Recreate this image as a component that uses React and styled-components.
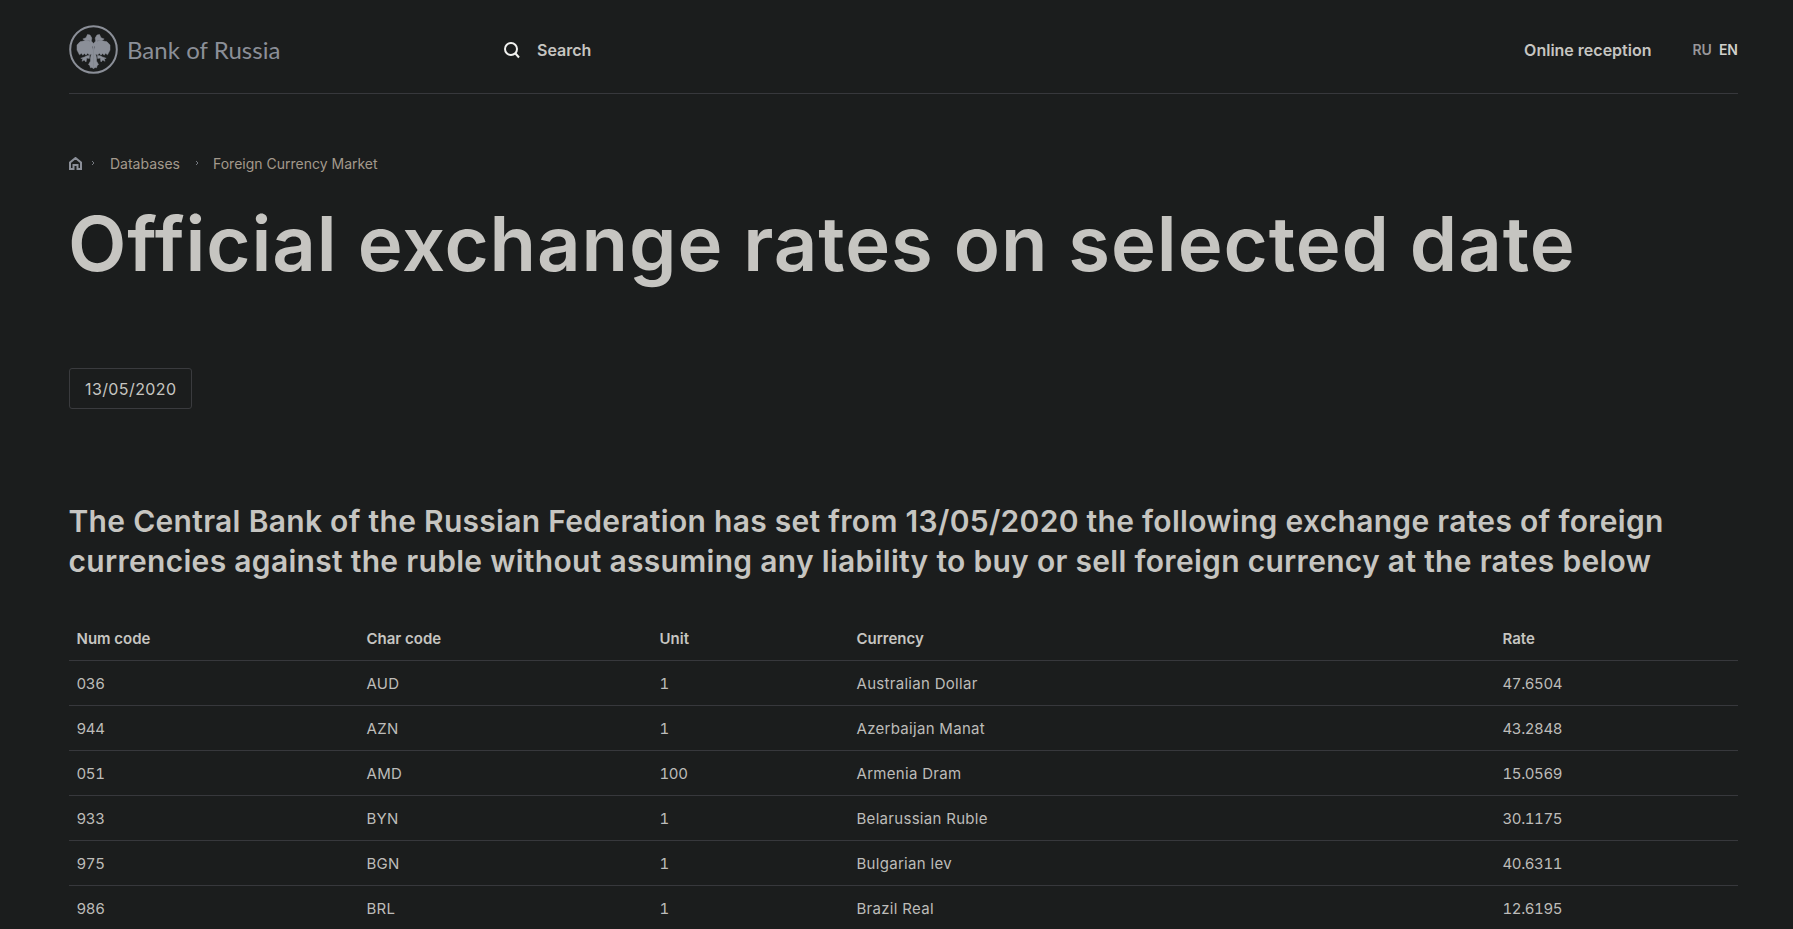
import React from 'react';
import styled, { createGlobalStyle } from 'styled-components';

const GlobalStyle = createGlobalStyle`
  html, body {
    margin: 0;
    padding: 0;
    background: #1b1d1d;
  }
  body {
    font-family: Inter, "Liberation Sans", sans-serif;
    color: #c6c5c1;
  }
`;

const Page = styled.div`
  padding: 0 55px 0 69px;
  height: 929px;
  overflow: hidden;
  box-sizing: border-box;
`;

const Header = styled.header`
  display: flex;
  align-items: center;
  height: 87px;
  padding-top: 6px;
  border-bottom: 1px solid #37383c;
`;

const Logo = styled.a`
  display: flex;
  align-items: center;
  gap: 9px;
  width: 434px;
  color: #8b8f98;
`;

const LogoText = styled.span`
  font-family: Lato, sans-serif;
  font-weight: 400;
  font-size: 24px;
  letter-spacing: 0.05px;
`;

const SearchBox = styled.div`
  display: flex;
  align-items: center;
  gap: 16px;
  flex: 1;
  font-size: 16px;
  font-weight: 600;
  color: #c6c5c1;
`;

const HeaderLink = styled.a`
  font-size: 16px;
  font-weight: 600;
  color: #c6c5c1;
  margin-right: 41px;
`;

const LangSwitch = styled.div`
  display: flex;
  gap: 7px;
  font-size: 14px;
  font-weight: 600;
`;

const Lang = styled.span`
  color: ${({ $active }) => ($active ? '#d0d0cc' : '#98979a')};
`;

const Breadcrumbs = styled.nav`
  display: flex;
  align-items: center;
  margin-top: 60px;
  height: 18px;
  font-size: 14px;
  color: #a3998c;
`;

const Crumb = styled.a`
  color: #a3998c;
`;

const Separator = styled.span`
  box-sizing: border-box;
  width: ${({ $first }) => ($first ? '28px' : '33px')};
  padding-right: ${({ $first }) => ($first ? '6px' : '0')};
  display: flex;
  justify-content: center;
`;

const Title = styled.h1`
  margin: 23px 0 0 -1px;
  font-size: 76px;
  line-height: 96px;
  font-weight: 600;
  letter-spacing: 0.9px;
  color: #c6c5c1;
`;

const DateField = styled.div`
  display: inline-flex;
  align-items: center;
  height: 39px;
  padding: 0 15px;
  margin-top: 77px;
  font-size: 16px;
  letter-spacing: 0.4px;
  color: #c6c5c1;
  border: 1px solid #3a3b3e;
  border-radius: 3px;
`;

const Lead = styled.h2`
  margin: 92px 0 0 -0.5px;
  font-size: 30px;
  line-height: 40px;
  font-weight: 600;
  letter-spacing: 0.3px;
  color: #c6c5c1;
`;

const Table = styled.table`
  width: 100%;
  margin-top: 35px;
  border-collapse: collapse;
  table-layout: fixed;
  font-size: 15px;
`;

const HeadCell = styled.th`
  height: 44px;
  padding: 0 7.5px;
  text-align: left;
  font-weight: 600;
  color: #c6c5c1;
  border-bottom: 1px solid #37383c;
`;

const Cell = styled.td`
  height: 44px;
  padding: 0 7.5px;
  letter-spacing: ${({ $numeric }) => ($numeric ? '-0.4px' : '0.3px')};
  font-variant-numeric: ${({ $numeric }) => ($numeric ? 'tabular-nums' : 'normal')};
  color: #bdbcb9;
  border-bottom: 1px solid #37383c;
`;

const columns = [
  { title: 'Num code', width: 290, numeric: true },
  { title: 'Char code', width: 293 },
  { title: 'Unit', width: 197, numeric: true },
  { title: 'Currency', width: 646 },
  { title: 'Rate', numeric: true },
];

const rates = [
  ['036', 'AUD', '1', 'Australian Dollar', '47.6504'],
  ['944', 'AZN', '1', 'Azerbaijan Manat', '43.2848'],
  ['051', 'AMD', '100', 'Armenia Dram', '15.0569'],
  ['933', 'BYN', '1', 'Belarussian Ruble', '30.1175'],
  ['975', 'BGN', '1', 'Bulgarian lev', '40.6311'],
  ['986', 'BRL', '1', 'Brazil Real', '12.6195'],
];

// left half of the eagle, mirrored for the right one
const eagleHalf =
  'M24.500 22 L21 19.500 L20.500 15.800 L16.500 15.800 L13.800 14 L17 12.800 L18.500 9.500 L21 10 L22.800 13 L22.300 16 L24.500 18.500 Z ' +
  'M20 16 L23 20 L23.500 28 L20.500 30 L18.500 28.300 L17 30.200 L15.300 28.500 L13.800 30.200 L12.500 28.300 L10.500 29.800 L8 25 L8 20 L11 16.800 L15.500 15.800 Z ' +
  'M24.500 19.500 V43.500 L22.800 42.500 L21.500 42.800 L20.800 40.500 L19.500 39.500 L21.500 36 L21.500 33 L22.500 28 Z ' +
  'M20.500 30.500 L20.300 33.500 L17.800 33 L17 37 L15.200 35 L13 36.300 L13.800 33.800 L11.800 33.300 L15.500 32 L18 30.800 Z';

const Emblem = () => (
  <svg width="49" height="49" viewBox="0 0 49 49" fill="none">
    <circle cx="24.5" cy="24.5" r="23.300" stroke="#8b8f98" strokeWidth="2" />
    <path fill="#8b8f98" stroke="#8b8f98" strokeWidth="0.500" d={eagleHalf} />
    <path fill="#8b8f98" stroke="#8b8f98" strokeWidth="0.500" d={eagleHalf} transform="matrix(-1 0 0 1 49 0)" />
  </svg>
);

const SearchIcon = () => (
  <svg width="18" height="18" viewBox="0 0 18 18" fill="none" stroke="#f2f2f0" strokeWidth="2">
    <circle cx="8" cy="8" r="6" />
    <path d="M12.500 12.500L16 16.500" />
  </svg>
);

const HomeIcon = () => (
  <svg width="13" height="13" viewBox="0 0 13 13" fill="none" stroke="#8b8f98" strokeWidth="2">
    <path d="M1 12V5.500L6.500 1 12 5.500V12H8.500V8h-4v4z" />
  </svg>
);

const Chevron = () => (
  <svg width="4" height="6" viewBox="0 0 4 6" fill="none" stroke="#8b8f98" strokeWidth="0.800">
    <path d="M1 1l2 2-2 2" />
  </svg>
);

const App = () => (
  <Page>
    <GlobalStyle />
    <Header>
      <Logo>
        <Emblem />
        <LogoText>Bank of Russia</LogoText>
      </Logo>
      <SearchBox>
        <SearchIcon />
        Search
      </SearchBox>
      <HeaderLink>Online reception</HeaderLink>
      <LangSwitch>
        <Lang>RU</Lang>
        <Lang $active>EN</Lang>
      </LangSwitch>
    </Header>
    <Breadcrumbs>
      <HomeIcon />
      <Separator $first><Chevron /></Separator>
      <Crumb>Databases</Crumb>
      <Separator><Chevron /></Separator>
      <Crumb>Foreign Currency Market</Crumb>
    </Breadcrumbs>
    <Title>Official exchange rates on selected date</Title>
    <DateField>13/05/2020</DateField>
    <Lead>
      The Central Bank of the Russian Federation has set from 13/05/2020 the following exchange rates of foreign
      currencies against the ruble without assuming any liability to buy or sell foreign currency at the rates below
    </Lead>
    <Table>
      <colgroup>
        {columns.map((col) => (
          <col key={col.title} style={col.width ? { width: col.width } : undefined} />
        ))}
      </colgroup>
      <thead>
        <tr>
          {columns.map((col) => (
            <HeadCell key={col.title}>{col.title}</HeadCell>
          ))}
        </tr>
      </thead>
      <tbody>
        {rates.map((row) => (
          <tr key={row[0]}>
            {row.map((value, i) => (
              <Cell key={i} $numeric={columns[i].numeric}>{value}</Cell>
            ))}
          </tr>
        ))}
      </tbody>
    </Table>
  </Page>
);

export default App;
